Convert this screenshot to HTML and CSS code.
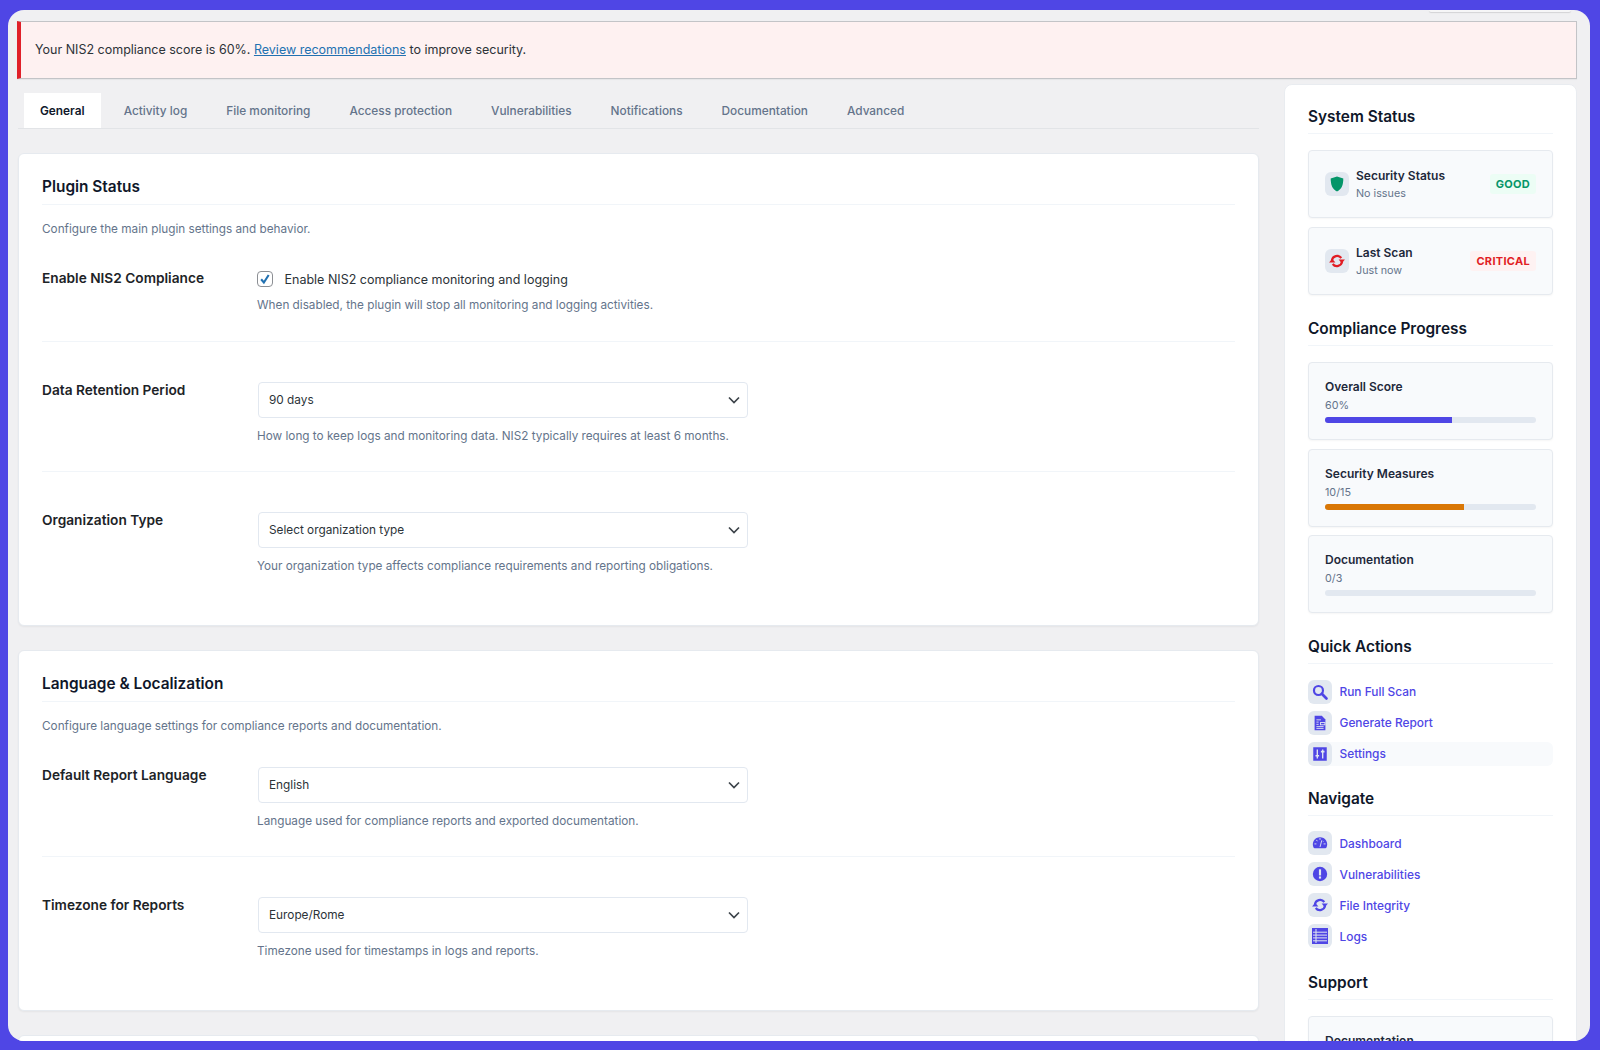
FILE: index.html
```html
<!DOCTYPE html>
<html lang="en">
<head>
<meta charset="utf-8">
<title>NIS2 Compliance Settings</title>
<link rel="stylesheet" href="styles.css">
</head>
<body>
<div class="window">
  <div class="meta-tab"></div>
  <div class="notice">Your NIS2 compliance score is 60%. <a href="#">Review recommendations</a> to improve security.</div>
  <div class="columns">
    <main class="main">
      <nav class="tabs">
        <a class="tab active" href="#">General</a>
        <a class="tab" href="#">Activity log</a>
        <a class="tab" href="#">File monitoring</a>
        <a class="tab" href="#">Access protection</a>
        <a class="tab" href="#">Vulnerabilities</a>
        <a class="tab" href="#">Notifications</a>
        <a class="tab" href="#">Documentation</a>
        <a class="tab" href="#">Advanced</a>
      </nav>
      <div class="stack">
        <section class="card">
          <h2>Plugin Status</h2>
          <p class="desc">Configure the main plugin settings and behavior.</p>
          <div class="field first">
            <div class="label">Enable NIS2 Compliance</div>
            <div class="control">
              <div class="check-line">
                <span class="checkbox"><svg viewBox="0 0 16 16" width="16" height="16"><path d="M3.600 8.300 6.700 12 12.200 3.400" fill="none" stroke="#2271b1" stroke-width="2.400"/></svg></span>
                <span>Enable NIS2 compliance monitoring and logging</span>
              </div>
              <p class="help check-help">When disabled, the plugin will stop all monitoring and logging activities.</p>
            </div>
          </div>
          <div class="field">
            <div class="label">Data Retention Period</div>
            <div class="control">
              <div class="select">90 days<svg class="chev" viewBox="0 0 12 8" width="12" height="8"><path d="M1 1.500 6 6.500 11 1.500" fill="none" stroke="#3c434a" stroke-width="1.700"/></svg></div>
              <p class="help">How long to keep logs and monitoring data. NIS2 typically requires at least 6 months.</p>
            </div>
          </div>
          <div class="field last">
            <div class="label">Organization Type</div>
            <div class="control">
              <div class="select">Select organization type<svg class="chev" viewBox="0 0 12 8" width="12" height="8"><path d="M1 1.500 6 6.500 11 1.500" fill="none" stroke="#3c434a" stroke-width="1.700"/></svg></div>
              <p class="help">Your organization type affects compliance requirements and reporting obligations.</p>
            </div>
          </div>
        </section>
        <section class="card">
          <h2>Language &amp; Localization</h2>
          <p class="desc">Configure language settings for compliance reports and documentation.</p>
          <div class="field first">
            <div class="label">Default Report Language</div>
            <div class="control">
              <div class="select">English<svg class="chev" viewBox="0 0 12 8" width="12" height="8"><path d="M1 1.500 6 6.500 11 1.500" fill="none" stroke="#3c434a" stroke-width="1.700"/></svg></div>
              <p class="help">Language used for compliance reports and exported documentation.</p>
            </div>
          </div>
          <div class="field last">
            <div class="label">Timezone for Reports</div>
            <div class="control">
              <div class="select">Europe/Rome<svg class="chev" viewBox="0 0 12 8" width="12" height="8"><path d="M1 1.500 6 6.500 11 1.500" fill="none" stroke="#3c434a" stroke-width="1.700"/></svg></div>
              <p class="help">Timezone used for timestamps in logs and reports.</p>
            </div>
          </div>
        </section>
        <section class="card tall"></section>
      </div>
    </main>
    <aside class="sidebar">
      <h3>System Status</h3>
      <div class="tiles">
        <div class="tile status">
          <span class="ico green"><svg viewBox="0 0 20 20" width="18" height="18"><path d="M10 1.600 17 4c0 7-1.600 11.600-7 14.400C4.600 15.600 3 11 3 4Z" fill="currentColor"/></svg></span>
          <div class="tile-text"><div class="tile-title">Security Status</div><div class="tile-sub">No issues</div></div>
          <span class="badge good">GOOD</span>
        </div>
        <div class="tile status">
          <span class="ico red"><svg viewBox="0 0 20 20" width="18" height="18"><use href="#i-update"/></svg></span>
          <div class="tile-text"><div class="tile-title">Last Scan</div><div class="tile-sub">Just now</div></div>
          <span class="badge critical">CRITICAL</span>
        </div>
      </div>
      <h3>Compliance Progress</h3>
      <div class="tiles">
        <div class="tile">
          <div class="tile-title">Overall Score</div><div class="tile-sub">60%</div>
          <div class="bar"><div class="fill indigo" style="width:60%"></div></div>
        </div>
        <div class="tile">
          <div class="tile-title">Security Measures</div><div class="tile-sub">10/15</div>
          <div class="bar"><div class="fill orange" style="width:66%"></div></div>
        </div>
        <div class="tile">
          <div class="tile-title">Documentation</div><div class="tile-sub">0/3</div>
          <div class="bar"></div>
        </div>
      </div>
      <h3>Quick Actions</h3>
      <div class="links">
        <a class="link" href="#"><span class="ico"><svg viewBox="0 0 20 20" width="18" height="18"><circle cx="8.300" cy="8.300" r="5" fill="none" stroke="currentColor" stroke-width="2.400"/><path d="M12 12l5.200 5.200" stroke="currentColor" stroke-width="3" stroke-linecap="round"/></svg></span>Run Full Scan</a>
        <a class="link" href="#"><span class="ico"><svg viewBox="0 0 20 20" width="18" height="18"><path fill="currentColor" d="M4 2h8l4 4v12H4Z"/><path d="M6 6.500h5M6 9h2.500M6 11.500h2.500M6 14h8M6 16h8" stroke="#e2e8f0" stroke-width="1"/><path d="M10 9h6v3.500h-6Z" fill="#e2e8f0"/><path d="M11 10h4v1.500h-4Z" fill="currentColor"/></svg></span>Generate Report</a>
        <a class="link hover" href="#"><span class="ico"><svg viewBox="0 0 20 20" width="18" height="18"><rect x="2.500" y="2.500" width="15" height="15" fill="currentColor"/><path d="M7 5v10M13 5v10" stroke="#e2e8f0" stroke-width="1.500"/><path d="M5 11h4v1.800H5ZM11 6.500h4v1.800h-4Z" fill="#e2e8f0"/></svg></span>Settings</a>
      </div>
      <h3 class="tight">Navigate</h3>
      <div class="links">
        <a class="link" href="#"><span class="ico"><svg viewBox="0 0 20 20" width="18" height="18"><path fill="currentColor" d="M10 3.500a8 8 0 0 1 7.200 11.500 1.500 1.500 0 0 1-1.300.8H4.100a1.500 1.500 0 0 1-1.300-.8A8 8 0 0 1 10 3.500Z"/><path d="M10 14.500 12 7M6 6.500l1 1.500M3.800 11H6M14 8l-.6.600M16.200 11H14M10 4.500v2" stroke="#e2e8f0" stroke-width="1" fill="none"/></svg></span>Dashboard</a>
        <a class="link" href="#"><span class="ico"><svg viewBox="0 0 20 20" width="18" height="18"><circle cx="10" cy="10" r="8" fill="currentColor"/><rect x="8.800" y="4.800" width="2.400" height="6.800" fill="#e2e8f0"/><rect x="8.800" y="12.700" width="2.400" height="2.400" fill="#e2e8f0"/></svg></span>Vulnerabilities</a>
        <a class="link" href="#"><span class="ico"><svg viewBox="0 0 20 20" width="18" height="18"><use href="#i-update"/></svg></span>File Integrity</a>
        <a class="link" href="#"><span class="ico"><svg viewBox="0 0 20 20" width="20" height="20"><rect x="2" y="2" width="16" height="16" fill="currentColor"/><path d="M3 6.200h14M3 9.100h14M3 11.900h14M3 14.800h14M6 3v14" stroke="#e2e8f0" stroke-width="1"/></svg></span>Logs</a>
      </div>
      <h3 class="loose">Support</h3>
      <div class="tiles">
        <div class="tile">
          <div class="tile-title">Documentation</div>
        </div>
      </div>
    </aside>
  </div>
</div>
<svg class="defs" width="0" height="0">
  <symbol id="i-update" viewBox="0 0 20 20">
    <path d="M4.300 9.500A5.900 5.900 0 0 1 14.800 6.700" fill="none" stroke="currentColor" stroke-width="2.400"/>
    <path d="M11.800 8.300H18.800L15.300 12.500Z" fill="currentColor"/>
    <path d="M15.700 10.500A5.900 5.900 0 0 1 5.200 13.300" fill="none" stroke="currentColor" stroke-width="2.400"/>
    <path d="M8.200 11.700H1.200L4.700 7.500Z" fill="currentColor"/>
  </symbol>
</svg>
</body>
</html>
```
FILE: styles.css
```css
* { box-sizing: border-box; }
html, body { margin: 0; height: 100%; }
body {
  background: #4f46e5;
  padding: 10px 10px 9px 8px;
  font-family: Inter, "Liberation Sans", sans-serif;
  overflow: hidden;
}
a { text-decoration: none; }
p { margin: 0; }
.defs { position: absolute; }

.window {
  position: relative;
  height: 1031px;
  background: #f0f0f2;
  border-radius: 16px;
  overflow: hidden;
  padding: 10.500px 13px 0 9px;
}
.meta-tab {
  position: absolute;
  top: 0;
  left: 1421px;
  width: 142px;
  height: 2px;
  background: #f6f6f7;
  border-radius: 0 0 6px 6px;
  box-shadow: 0 1px 1px rgba(0, 0, 0, .12);
}
.notice {
  height: 58px;
  line-height: 56.500px;
  background: #fef1f1;
  border: 1px solid #c3c4c7;
  border-left: 4px solid #e0202a;
  padding-left: 14px;
  font-size: 12.500px;
  color: #2c3338;
  box-shadow: 0 1px 1px rgba(0, 0, 0, .04);
}
.notice a { color: #2271b1; text-decoration: underline; }

.columns { display: flex; gap: 25px; margin-top: 5.500px; }
.main { width: 1242px; flex: none; padding-left: 1px; }

.tabs {
  display: flex;
  gap: 7px;
  margin-top: 9px;
  padding-left: 6px;
  height: 36px;
  border-bottom: 1px solid #e2e4e7;
}
.tab {
  height: 35px;
  line-height: 36px;
  padding: 0 16px;
  font-size: 11.850px;
  font-weight: 500;
  color: #64748b;
}
.tab.active { background: #fff; color: #0f172a; font-weight: 600; }

.stack { display: flex; flex-direction: column; gap: 24px; margin-top: 24px; }
.card {
  background: #fff;
  border: 1px solid #e6eaef;
  border-radius: 6px;
  padding: 23px 23px 24px;
  box-shadow: 0 1px 2px rgba(0, 0, 0, .05);
}
.card.tall { height: 300px; }
h2 {
  margin: 0;
  font-size: 15.400px;
  line-height: 20px;
  font-weight: 600;
  color: #0f172a;
  padding-bottom: 7px;
  border-bottom: 1px solid #f1f5f9;
}
.desc { margin-top: 15px; font-size: 11.750px; line-height: 18px; color: #64748b; }

.field {
  display: flex;
  padding: 38px 0 26px;
  border-bottom: 1px solid #f1f5f9;
}
.field.first { padding-top: 30px; }
.field.last { border-bottom: 0; }
.label {
  width: 215px;
  flex: none;
  font-size: 13.700px;
  line-height: 20px;
  font-weight: 600;
  color: #1d2327;
}
.control { padding-top: 2px; }
.check-line {
  display: flex;
  align-items: center;
  gap: 11.500px;
  height: 18px;
  font-size: 12.500px;
  color: #2c3338;
}
.checkbox {
  width: 16px;
  height: 16px;
  border: 1.500px solid #8c8f94;
  border-radius: 4px;
  background: #fff;
  display: flex;
  align-items: center;
  justify-content: center;
}
.help { margin-top: 9px; font-size: 11.750px; line-height: 18px; color: #64748b; }
.help.check-help { margin-top: 8px; margin-bottom: 1px; }
.select {
  position: relative;
  width: 490px;
  height: 36px;
  margin-left: 1px;
  padding-left: 10px;
  line-height: 34px;
  background: #fff;
  border: 1px solid #e2e8f0;
  border-radius: 4px;
  font-size: 11.800px;
  color: #2c3338;
}
.chev { position: absolute; right: 7px; top: 13px; }

.sidebar {
  width: 293px;
  flex: none;
  background: #fff;
  border: 1px solid #e9ecf0;
  border-radius: 8px;
  padding: 22px 23px 60px;
}
h3 {
  margin: 24px 0 16px;
  font-size: 15.400px;
  line-height: 19px;
  font-weight: 600;
  color: #0f172a;
  padding-bottom: 7px;
  border-bottom: 1px solid #f1f5f9;
}
.sidebar h3:first-child { margin-top: 0; }
.sidebar h3.tight { margin-top: 23px; }
.sidebar h3.loose { margin-top: 25px; }
.tiles { display: flex; flex-direction: column; gap: 8.500px; }
.status + .status { margin-top: .500px; }
.tile {
  background: #f8fafc;
  border: 1px solid #e6eaef;
  border-radius: 4px;
  padding: 15px 16px 16px;
  box-shadow: 0 1px 2px rgba(0, 0, 0, .04);
}
.tile.status {
  display: flex;
  align-items: center;
  gap: 7px;
  height: 68px;
  padding: 0 16px;
}
.tile-text { flex: 1; padding-top: 1px; }
.tile-title { font-size: 12px; line-height: 18px; font-weight: 600; color: #1e293b; }
.tile-sub { margin-top: 1px; font-size: 10.750px; line-height: 18px; color: #64748b; }
.status .tile-title { line-height: 17px; }
.ico {
  width: 24px;
  height: 24px;
  flex: none;
  border-radius: 6px;
  background: #e2e8f0;
  display: flex;
  align-items: center;
  justify-content: center;
  color: #4f46e5;
}
.ico.green { color: #059669; }
.ico.red { color: #e11d24; }
.ico svg { display: block; }
.badge {
  font-size: 11px;
  line-height: 20px;
  font-weight: 700;
  letter-spacing: .3px;
  padding: 0 6px;
  border-radius: 3px;
}
.badge.good { color: #059669; background: #ecfdf5; }
.badge.critical { color: #e11d24; background: #fef2f2; }
.bar { height: 6px; margin-top: 2px; background: #e2e8f0; border-radius: 3px; overflow: hidden; }
.fill { height: 100%; }
.fill.indigo { background: #4f46e5; }
.fill.orange { background: #d97706; }
.links { display: flex; flex-direction: column; gap: 7px; margin-top: -.500px; }
.link {
  display: flex;
  align-items: center;
  gap: 7.500px;
  height: 24px;
  font-size: 11.900px;
  font-weight: 500;
  color: #4f46e5;
  border-radius: 6px;
}
.link.hover { background: #f8fafc; }
```
